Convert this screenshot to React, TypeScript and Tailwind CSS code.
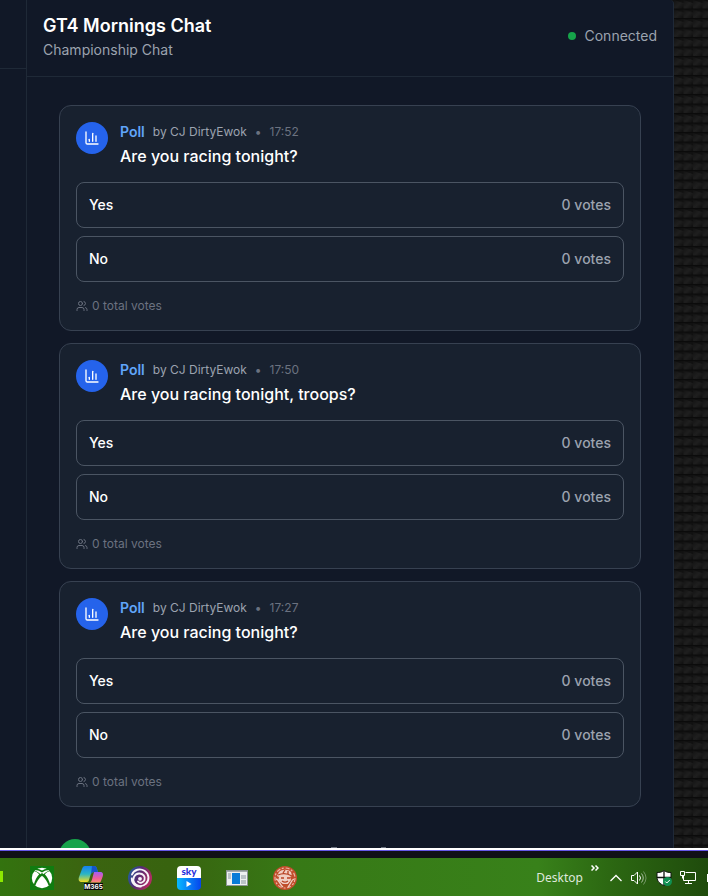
import React from 'react';
import { ChartColumn, Users } from 'lucide-react';

type PollData = { id: string; author: string; time: string; question: string; options: string[] };

const polls: PollData[] = [
  { id: 'p1', author: 'CJ DirtyEwok', time: '17:52', question: 'Are you racing tonight?', options: ['Yes', 'No'] },
  { id: 'p2', author: 'CJ DirtyEwok', time: '17:50', question: 'Are you racing tonight, troops?', options: ['Yes', 'No'] },
  { id: 'p3', author: 'CJ DirtyEwok', time: '17:27', question: 'Are you racing tonight?', options: ['Yes', 'No'] },
];

function Poll({ poll }: { poll: PollData }) {
  return (
    <article className="rounded-xl border border-[#374151] bg-[#18212f] p-4">
      <div className="mb-3 flex gap-3">
        <div className="flex size-8 shrink-0 items-center justify-center rounded-full bg-[#2563eb] text-white">
          <ChartColumn size={16} strokeWidth={2} />
        </div>
        <div>
          <div className="flex items-center gap-2 text-xs leading-5">
            <span className="text-sm leading-5 font-semibold text-[#60a5fa]">Poll</span>
            <span className="text-[#9ca3af]">by {poll.author}</span>
            <span className="text-[#6b7280]">•</span>
            <time className="text-[#6b7280]">{poll.time}</time>
          </div>
          <h2 className="text-base leading-7 font-medium text-white">{poll.question}</h2>
        </div>
      </div>
      <div className="flex flex-col gap-2">
        {poll.options.map((option) => (
          <button
            key={option}
            type="button"
            className="flex items-center justify-between rounded-lg border border-[#4b5563] p-3 text-sm leading-5 font-medium"
          >
            <span className="text-white">{option}</span>
            <span className="text-[#9ca3af]">0 votes</span>
          </button>
        ))}
      </div>
      <div className="mt-4 flex items-center gap-1 text-xs leading-4 text-[#6b7280]">
        <Users size={12} />
        <span>0 total votes</span>
      </div>
    </article>
  );
}

function CarbonStrip() {
  return (
    <svg className="h-full w-[34px] shrink-0 bg-[#141414]" aria-hidden="true">
      <defs>
        <linearGradient id="weave" x1="0" y1="0" x2="1" y2="1">
          <stop offset="0" stopColor="#131313" />
          <stop offset=".5" stopColor="#1f1f1f" />
          <stop offset="1" stopColor="#0d0d0d" />
        </linearGradient>
        <pattern id="carbon" width="9.5" height="9.5" patternUnits="userSpaceOnUse">
          <rect width="9.5" height="9.5" fill="url(#weave)" />
          <path d="M0 0H9.5V3Z" fill="#090909" opacity=".6" />
          <path d="M0 9H9.5" stroke="#0b0b0b" strokeWidth="1" />
        </pattern>
      </defs>
      <rect width="100%" height="100%" fill="url(#carbon)" />
    </svg>
  );
}

function XboxIcon() {
  return (
    <svg viewBox="0 0 24 24" className="size-6">
      <rect width="24" height="24" fill="#107c10" />
      <circle cx="12" cy="12" r="10.2" fill="#fff" />
      <path d="M6 3.600C8.200 3.200 10.300 4.400 12 5.500c1.700-1.100 3.800-2.300 6-1.900" fill="none" stroke="#107c10" strokeWidth="1.600" />
      <path d="M4 4.500C7 5 10 7.500 12 9.600 9 12.500 6.500 16 5.200 20L3.800 18.800C4.700 14.500 7 10.500 9.200 8.200 7.500 6.500 5.500 5.300 4 5ZM20 4.500C17 5 14 7.500 12 9.600c3 2.900 5.500 6.400 6.800 10.400l1.400-1.200c-.9-4.300-3.200-8.300-5.400-10.600C16.500 6.500 18.500 5.300 20 5Z" fill="#107c10" />
      <path d="M12 7l2 1.500-2 2-2-2Z" fill="#107c10" />
    </svg>
  );
}

function M365Icon() {
  return (
    <svg viewBox="0 0 26 26" className="h-[26px] w-[26px]">
      <defs>
        <linearGradient id="mA" x1="0" y1="0" x2="0" y2="1">
          <stop offset="0" stopColor="#1680ee" />
          <stop offset=".5" stopColor="#2bb5c4" />
          <stop offset="1" stopColor="#f2dc20" />
        </linearGradient>
        <linearGradient id="mB" x1="0" y1="0" x2="0" y2="1">
          <stop offset="0" stopColor="#a45cf5" />
          <stop offset=".6" stopColor="#ee5f9b" />
          <stop offset="1" stopColor="#ff8a70" />
        </linearGradient>
      </defs>
      <path d="M7 1h9c2 0 2.500 1 3 3l1 3h-4c-2 0-3 1-3.500 3L11 15c-.5 2-1.500 2-3 2H4c-3 0-4-2-3-5L4 4c.7-2 1.500-3 3-3Z" fill="url(#mA)" />
      <path d="M14 1h2c2 0 2.500 1 3 3l1 3h-4c-1.500 0-2.300.7-3 2Z" fill="#1554c8" />
      <path d="M16 7h6c3 0 3.500 2 2.700 4.500L23 16c-.4 1-1 1.500-2 1.500h-9c1-.5 1.500-1.500 2-3Z" fill="url(#mB)" />
      <rect x="6" y="18" width="19" height="7" fill="#080808" />
      <text x="15.500" y="24" textAnchor="middle" fontFamily="Inter, sans-serif" fontSize="6.500" fontWeight="700" fill="#fff">M365</text>
    </svg>
  );
}

function UbisoftIcon() {
  return (
    <svg viewBox="0 0 24 24" className="size-6">
      <defs>
        <linearGradient id="ubi" x1="0" y1="0" x2="1" y2=".4">
          <stop offset="0" stopColor="#176ba8" />
          <stop offset=".5" stopColor="#522b73" />
          <stop offset="1" stopColor="#b02b63" />
        </linearGradient>
      </defs>
      <circle cx="12" cy="12" r="12" fill="url(#ubi)" />
      <g fill="none" stroke="#f7f3f8" strokeWidth="1.900" strokeLinecap="round">
        <path d="M4 8.500C6 3.500 12 2 16.500 4.800c5 3.200 5 9.500 1.500 12.900-3.500 3.600-9.500 3.200-11.800-.9C4 12.500 6.500 7.800 11 7.500c4-.2 6.700 3.200 5.500 6.500-1 2.800-4.700 3.800-6.500 1.500" />
        <path d="M3.800 12.500c0 5.500 4.500 8.500 9 8" />
      </g>
      <circle cx="12" cy="12.800" r="1.900" fill="#f7f3f8" />
    </svg>
  );
}

function SkyIcon() {
  return (
    <svg viewBox="0 0 24 24" className="size-6">
      <defs>
        <linearGradient id="skyBlue">
          <stop offset="0" stopColor="#08b9ff" />
          <stop offset="1" stopColor="#0645ed" />
        </linearGradient>
        <clipPath id="skyClip"><rect width="24" height="24" rx="4" /></clipPath>
      </defs>
      <g clipPath="url(#skyClip)">
        <rect width="24" height="12" fill="#fff" />
        <rect y="12" width="24" height="12" fill="url(#skyBlue)" />
      </g>
      <text x="12" y="9" textAnchor="middle" fontFamily="Lato, sans-serif" fontSize="10" fontWeight="900" fill="#2930dc">sky</text>
      <path d="M9.500 15v6l5-3Z" fill="#fff" />
    </svg>
  );
}

function NewsIcon() {
  return (
    <svg viewBox="0 0 22 16" className="h-4 w-[22px]">
      <rect x=".5" y=".5" width="21" height="15" fill="#eef0f0" stroke="#8d9694" />
      <path d="M1 1.500h20" stroke="#a4abad" />
      <rect x="6" y="3" width="8" height="11" fill="#087bd7" />
      <path d="M2 4h3M2 6h3M2 8h3M15 6h5M15 8h5M15 11h5M15 13h5" stroke="#88969d" />
    </svg>
  );
}

function EmblemIcon() {
  return (
    <svg viewBox="0 0 24 24" className="size-6">
      <circle cx="12" cy="12" r="12" fill="#c24e2c" />
      <circle cx="12" cy="12" r="10" fill="none" stroke="#e9b5a4" strokeWidth="1.200" strokeDasharray="4 1.500 2 2" />
      <path d="M6 6c3-3 9-3 12 0l1 4-2 1 1 3-3 4H9l-4-3 1-4-2-1Z" fill="#f0cfc4" />
      <path d="M5 9c4-2 9-2 14 1M8 12h3M14 12h3M9 15c2 1.500 4 1.500 6 0M12 4l-2 3M15 5v3M6 16l4 3M18 16l-3 3" fill="none" stroke="#b84325" strokeWidth="1.300" />
      <path d="M3 13c3 0 3 5 7 8M21 13c-3 1-3 5-6 8" stroke="#f0d0c6" strokeWidth="1.300" fill="none" />
    </svg>
  );
}

function Taskbar() {
  return (
    <footer className="shrink-0 border-t-2 border-white">
      <div className="h-2 border-t border-[#6557e8] bg-[#101017]" />
      <div className="flex h-[38px] items-center justify-between overflow-hidden bg-[linear-gradient(90deg,#33730f_0%,#3b6410_12%,#38630f_24%,#377916_42%,#38811a_76%,#2c6812_86%,#1f4b0c_100%)] pt-[2px]">
        <div className="flex items-center">
          <div className="mr-[27px] mb-1 h-[11px] w-[3px] bg-[#8de900]" />
          <div className="flex items-center gap-6">
            <button type="button" aria-label="Xbox"><XboxIcon /></button>
            <button type="button" aria-label="Microsoft 365"><M365Icon /></button>
            <button type="button" aria-label="Ubisoft Connect"><UbisoftIcon /></button>
            <button type="button" aria-label="Sky" className="mr-px ml-px"><SkyIcon /></button>
            <button type="button" aria-label="News" className="mr-px"><NewsIcon /></button>
            <button type="button" aria-label="Game"><EmblemIcon /></button>
          </div>
        </div>
        <div className="flex items-center text-white">
          <span className="font-['Noto_Sans',sans-serif] text-xs leading-4 text-[#dfe8dc]">Desktop</span>
          <svg viewBox="0 0 8 6" className="mb-5 ml-2 h-[6px] w-2" fill="none" stroke="currentColor" strokeWidth="1.500"><path d="M.5.5L3 3 .5 5.500M4.500.5L7 3 4.500 5.500" /></svg>
          <svg viewBox="0 0 12 8" className="ml-[11px] h-2 w-3" fill="none" stroke="currentColor" strokeWidth="1.300"><path d="M.5 7L6 1.500 11.500 7" /></svg>
          <svg viewBox="0 0 16 16" className="ml-[9px] size-4" fill="none" stroke="currentColor"><path d="M.5 5.500h2.500l3.500-3.500v12l-3.500-3.500H.5Z" /><path d="M8.500 5.500q2 2.500 0 5" /><path d="M10.500 3.500q3.500 4.500 0 9" opacity=".6" /><path d="M12.500 1.500q5 6.500 0 13" opacity=".35" /></svg>
          <svg viewBox="0 0 16 16" className="ml-[9px] size-4"><path d="M8 .5C6 2.200 3.500 2.500 1 2.500V7c0 4.500 3 7 7 8.500 4-1.500 7-4 7-8.500V2.500c-2.500 0-5-.3-7-2Z" fill="#fff" stroke="#101810" /><path d="M8 1v14M1 7.500h14" stroke="#101810" strokeWidth="1.300" /><circle cx="11.500" cy="11.500" r="4.500" fill="#109052" /><path d="M9.300 11.500l1.500 1.500 3-3" fill="none" stroke="#fff" /></svg>
          <svg viewBox="0 0 16 14" className="mr-[11px] ml-2 h-[14px] w-4" fill="none" stroke="currentColor"><path d="M5.500 1.500h10v8H3.500V5M8.500 9.500v3M5 12.500h7" /><path d="M.5.500h4v4h-4ZM2.500 4.500v3" /></svg>
          <div className="h-2 w-px bg-white" />
        </div>
      </div>
    </footer>
  );
}

export default function App() {
  return (
    <div className="flex h-screen flex-col overflow-hidden bg-[#111827] font-['Inter',sans-serif]">
      <div className="flex min-h-0 flex-1 overflow-hidden bg-[#111111]">
        <aside className="w-[27px] shrink-0 border-r border-[#1f2937] bg-[#111827]">
          <div className="h-[69px] border-b border-[#1f2937]" />
        </aside>
        <main className="min-w-0 flex-1 overflow-hidden rounded-tr border-r border-[#1f2937] bg-[#111827]">
          <header className="flex items-center justify-between border-b border-[#1f2937] px-4 pt-3 pb-4">
            <div>
              <h1 className="text-lg leading-7 font-semibold text-white">GT4 Mornings Chat</h1>
              <p className="text-sm leading-5 text-[#9ca3af]">Championship Chat</p>
            </div>
            <div className="flex items-center gap-2 text-sm leading-5 text-[#9ca3af]">
              <span className="size-2 rounded-full bg-[#16a34a]" />
              Connected
            </div>
          </header>
          <div className="flex flex-col gap-3 px-8 pt-7">
            {polls.map((poll) => <Poll key={poll.id} poll={poll} />)}
          </div>
          <div className="mt-8 flex px-8">
            <div className="size-8 rounded-full bg-[#16a34a]" />
            <div className="mt-2 ml-[240px] flex gap-11">
              <span className="h-px w-[6px] bg-[#6b7280]" />
              <span className="h-px w-[5px] bg-[#6b7280]" />
            </div>
          </div>
        </main>
        <CarbonStrip />
      </div>
      <Taskbar />
    </div>
  );
}
